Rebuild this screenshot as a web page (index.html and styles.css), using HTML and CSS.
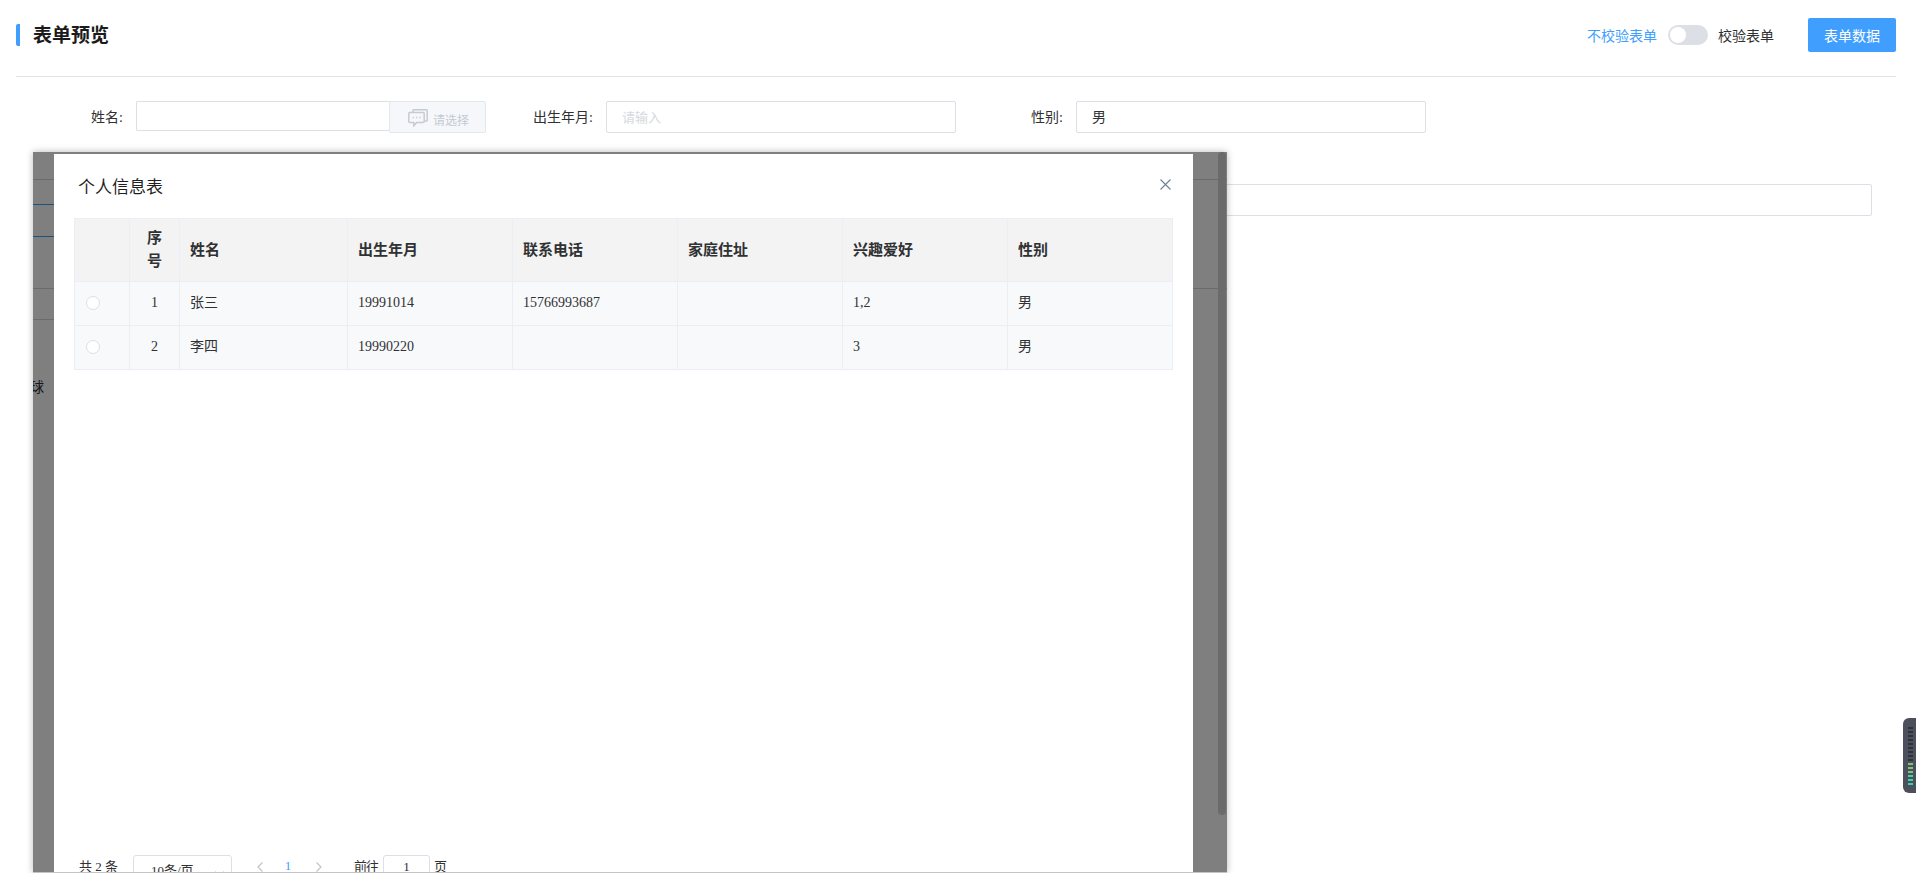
FILE: index.html
```html
<!DOCTYPE html>
<html lang="en">
<head>
    <meta charset="UTF-8">
    <title>表单预览</title>
    <link rel="stylesheet" href="styles.css">
</head>
<body>
    <div class="page">
        <div class="top-bar">
            <h1 class="page-title">表单预览</h1>
            <div class="top-actions">
                <span class="switch-label active">不校验表单</span>
                <span class="switch"><span class="switch-knob"></span></span>
                <span class="switch-label">校验表单</span>
                <button class="primary-btn">表单数据</button>
            </div>
        </div>

        <div class="form-row">
            <div class="field">
                <label class="field-label">姓名:</label>
                <div class="input-group">
                    <div class="text-input group-input"></div>
                    <div class="group-append">
                        <svg class="chat-icon" width="20" height="18" viewBox="0 0 20 18" fill="none" stroke="#c6cad2" stroke-width="1.5">
                            <path d="M5 3V1.500A.8.8 0 0 1 5.800.8h12.600a.8.8 0 0 1 .8.700v9.700a.8.8 0 0 1-.8.8H17"/>
                            <path d="M1.800 3.400h13.400a1 1 0 0 1 1 1v8.200a1 1 0 0 1-1 1H8.600l-2.800 3.200v-3.200h-4a1 1 0 0 1-1-1V4.400a1 1 0 0 1 1-1z"/>
                            <path d="M4.600 8.500h1.400M7.900 8.500h1.400M11.200 8.500h1.400" stroke-width="1.600"/>
                        </svg>
                        <span class="append-text">请选择</span>
                    </div>
                </div>
            </div>
            <div class="field">
                <label class="field-label">出生年月:</label>
                <div class="text-input placeholder">请输入</div>
            </div>
            <div class="field">
                <label class="field-label">性别:</label>
                <div class="text-input">男</div>
            </div>
        </div>

        <div class="wide-row">
            <div class="text-input wide-input"></div>
        </div>
    </div>

    <div class="frame">
        <div class="frame-lines">
            <div class="line line-a"></div>
            <div class="line line-b"></div>
            <div class="line line-c"></div>
            <div class="line line-d"></div>
            <div class="line line-e"></div>
            <div class="frame-text">球</div>
        </div>
        <div class="mask"></div>
        <div class="frame-scroll"></div>

        <div class="dialog">
            <div class="dialog-head">
                <span class="dialog-title">个人信息表</span>
                <svg class="dialog-close" width="11" height="11" viewBox="0 0 11 11" stroke="#6f7f92" stroke-width="1.100">
                    <path d="M.5.5l10 10M10.500.5l-10 10"/>
                </svg>
            </div>

            <table class="info-table">
                <colgroup>
                    <col class="col-radio"><col class="col-index"><col class="col-name">
                    <col class="col-data"><col class="col-data"><col class="col-data"><col class="col-data"><col>
                </colgroup>
                <thead>
                    <tr>
                        <th></th>
                        <th class="index-head">序号</th>
                        <th>姓名</th>
                        <th>出生年月</th>
                        <th>联系电话</th>
                        <th>家庭住址</th>
                        <th>兴趣爱好</th>
                        <th>性别</th>
                    </tr>
                </thead>
                <tbody>
                    <tr class="row-one">
                        <td class="center"><span class="radio"></span></td>
                        <td class="center">1</td>
                        <td class="cjk">张三</td>
                        <td>19991014</td>
                        <td>15766993687</td>
                        <td></td>
                        <td>1,2</td>
                        <td class="cjk">男</td>
                    </tr>
                    <tr class="row-two">
                        <td class="center"><span class="radio"></span></td>
                        <td class="center">2</td>
                        <td class="cjk">李四</td>
                        <td>19990220</td>
                        <td></td>
                        <td></td>
                        <td>3</td>
                        <td class="cjk">男</td>
                    </tr>
                </tbody>
            </table>

            <div class="pagination">
                <span class="page-text total">共 2 条</span>
                <div class="page-size">
                    <span>10条/页</span>
                    <svg width="9" height="5" viewBox="0 0 9 5" fill="none" stroke="#c0c4cc"><path d="M.5.500l4 4 4-4"/></svg>
                </div>
                <svg class="pager-prev" width="6" height="10" viewBox="0 0 6 10" fill="none" stroke="#c0c4cc" stroke-width="1.200"><path d="M5.500.500L1 5l4.500 4.500"/></svg>
                <span class="page-current">1</span>
                <svg class="pager-next" width="6" height="10" viewBox="0 0 6 10" fill="none" stroke="#c0c4cc" stroke-width="1.200"><path d="M.5.500L5 5 .5 9.500"/></svg>
                <span class="page-text goto">前往</span>
                <div class="goto-input">1</div>
                <span class="page-text goto-unit">页</span>
            </div>
        </div>
    </div>

    <div class="side-widget">
        <i></i><i></i><i></i><i></i><i></i><i></i><i></i><i></i><i></i>
        <i class="lit"></i><i class="lit"></i><i class="lit"></i><i class="lit teal"></i><i class="lit teal"></i><i class="lit teal"></i>
    </div>
</body>
</html>
```

FILE: styles.css
```css
html, body {
    margin: 0;
    height: 873px;
    overflow: hidden;
    background: #fff;
}
body {
    position: relative;
    font-family: "Liberation Serif", "Noto Sans CJK SC", serif;
    font-size: 14px;
    color: #303133;
}
.page {
    padding: 0 20px 0 16px;
}

/* top bar */
.top-bar {
    box-sizing: border-box;
    height: 77px;
    padding-bottom: 6px;
    display: flex;
    align-items: center;
    justify-content: space-between;
    border-bottom: 1px solid #e2e2ea;
}
.page-title {
    margin: 0;
    padding-left: 13px;
    border-left: 4px solid #409eff;
    border-radius: 2px;
    height: 22px;
    line-height: 24px;
    font-size: 19px;
    font-weight: bold;
    color: #1b1b1b;
}
.top-actions {
    display: flex;
    align-items: center;
}
.switch-label {
    font-family: "Noto Sans CJK SC", sans-serif;
}
.switch-label.active {
    color: #409eff;
}
.switch {
    width: 40px;
    height: 20px;
    margin: 0 10px 0 11px;
    border-radius: 10px;
    background: #dcdfe6;
    display: flex;
    align-items: center;
    padding-left: 2px;
    box-sizing: border-box;
}
.switch-knob {
    width: 16px;
    height: 16px;
    border-radius: 50%;
    background: #fff;
}
.primary-btn {
    width: 88px;
    height: 34px;
    margin-left: 34px;
    border: none;
    border-radius: 2px;
    background: #409eff;
    color: #fff;
    font-family: "Noto Sans CJK SC", sans-serif;
    font-size: 14px;
    padding: 0;
}

/* form */
.form-row {
    display: grid;
    grid-template-columns: repeat(3, 470px);
    margin-top: 24px;
}
.field {
    display: flex;
    align-items: flex-start;
}
.field-label {
    width: 107px;
    margin-right: 13px;
    line-height: 34px;
    text-align: right;
    flex-shrink: 0;
}
.text-input {
    box-sizing: border-box;
    width: 350px;
    height: 32px;
    padding-left: 15px;
    line-height: 32px;
    border: 1px solid #dcdfe6;
    border-radius: 2px;
    background: #fff;
}
.placeholder {
    color: #d5d8de;
    font-size: 13px;
}
.input-group {
    display: flex;
    align-items: flex-start;
}
.group-input {
    width: 254px;
    height: 30px;
    border-right: none;
    border-radius: 2px 0 0 2px;
}
.group-append {
    box-sizing: border-box;
    width: 97px;
    height: 32px;
    margin-left: -1px;
    padding-left: 18px;
    display: flex;
    align-items: center;
    border: 1px solid #e4e7ed;
    border-radius: 2px;
    background: #f5f7fa;
}
.chat-icon {
    margin-top: 1px;
}
.append-text {
    margin: 6px 0 0 5px;
    font-size: 12px;
    color: #c6cad2;
}
.wide-row {
    margin: 49px 0 0 120px;
}
.wide-input {
    width: 1736px;
}

/* the embedded frame that holds the dialog */
.frame {
    position: absolute;
    left: 33px;
    top: 152px;
    width: 1194px;
    height: 721px;
    box-sizing: border-box;
    overflow: hidden;
    background: #fff;
    border-bottom: 1px solid #c4c4c4;
    box-shadow: 0 0 7px rgba(0, 0, 0, 0.28);
}
.frame-lines {
    width: 100%;
}
.line {
    border-bottom: 1px solid #d6d6d6;
}
.line-a { height: 27px; }
.line-b { height: 24px; width: 100px; border-color: #3aa4ff; }
.line-c { height: 31px; width: 100px; border-color: #3aa4ff; }
.line-d { height: 51px; }
.line-e { height: 30px; width: 100px; }
.frame-text {
    margin: 58px 0 0 -3px;
    line-height: 20px;
}
.mask {
    position: absolute;
    inset: 0;
    background: rgba(0, 0, 0, 0.5);
}
.frame-scroll {
    position: absolute;
    right: 1px;
    top: 0;
    width: 8px;
    height: 663px;
    border-radius: 4px;
    background: #6b6b6b;
}
.dialog {
    position: absolute;
    left: 21px;
    top: 2px;
    width: 1139px;
    bottom: 0;
    overflow: hidden;
    background: #fff;
    display: flex;
    flex-direction: column;
    padding: 0 20px;
    box-sizing: border-box;
}
.dialog-head {
    height: 64px;
    flex-shrink: 0;
    display: flex;
    align-items: center;
    justify-content: space-between;
    padding: 0 2px 0 4px;
}
.dialog-title {
    margin-bottom: 2px;
    font-size: 17px;
    color: #1f1f1f;
}
.dialog-close {
    margin-bottom: 4px;
}

/* table */
.info-table {
    width: 1099px;
    flex-shrink: 0;
    table-layout: fixed;
    border-collapse: collapse;
    color: #303133;
}
.col-radio { width: 55px; }
.col-index { width: 50px; }
.col-name { width: 168px; }
.col-data { width: 165px; }
.info-table th, .info-table td {
    box-sizing: border-box;
    border: 1px solid #ebeef5;
    padding: 0 10px 2px;
    text-align: left;
    vertical-align: middle;
}
.info-table th {
    height: 63px;
    padding-bottom: 0;
    background: #f3f3f3;
    font-size: 15px;
    font-weight: bold;
    line-height: 23px;
}
.info-table td {
    background: #f8f9fb;
}
.row-one td { height: 44px; }
.row-two td { height: 44px; }
.info-table .cjk {
    padding-bottom: 5px;
}
.info-table .index-head {
    padding: 0 12px;
    text-align: center;
}
.info-table .center {
    padding: 0 0 2px;
    text-align: center;
}
.radio {
    display: inline-block;
    box-sizing: border-box;
    width: 14px;
    height: 14px;
    margin: 0 19px 0 0;
    border: 1px solid #dcdfe6;
    border-radius: 50%;
    background: #fff;
    vertical-align: middle;
}

/* pagination, cut off by the frame */
.pagination {
    height: 32px;
    flex-shrink: 0;
    margin: 485px 0 0 5px;
    display: flex;
    align-items: flex-start;
    font-size: 13px;
    color: #606266;
}
.page-text {
    line-height: 24px;
    color: #303133;
    white-space: nowrap;
}
.total {
    width: 39px;
}
.page-size {
    box-sizing: border-box;
    width: 99px;
    height: 32px;
    margin-left: 15px;
    padding: 0 7px 0 17px;
    display: flex;
    align-items: center;
    justify-content: space-between;
    border: 1px solid #dcdfe6;
    border-radius: 3px;
    position: relative;
}
.page-size span {
    margin-top: -4px;
    color: #303133;
}
.page-size svg {
    margin-top: 4px;
}
.pager-prev {
    margin: 7px 0 0 25px;
}
.page-current {
    width: 8px;
    margin-left: 21px;
    line-height: 22px;
    color: #409eff;
    text-align: center;
}
.pager-next {
    margin: 7px 0 0 24px;
}
.goto {
    margin-left: 32px;
    letter-spacing: -1px;
}
.goto-input {
    box-sizing: border-box;
    width: 47px;
    height: 32px;
    margin-left: 5px;
    line-height: 22px;
    text-align: center;
    border: 1px solid #dcdfe6;
    border-radius: 3px;
    color: #303133;
}
.goto-unit {
    margin-left: 4px;
}

/* floating widget on the right edge */
.side-widget {
    position: absolute;
    right: 0;
    top: 718px;
    width: 13px;
    height: 75px;
    box-sizing: border-box;
    padding: 9px 3px 0 5px;
    display: flex;
    flex-direction: column;
    gap: 2px;
    background: #4c505d;
    border-radius: 6px 0 0 6px;
}
.side-widget i {
    display: block;
    height: 2px;
    background: #2f323b;
}
.side-widget .lit {
    background: #84c27a;
}
.side-widget .teal {
    background: #3fd0a4;
}
```
